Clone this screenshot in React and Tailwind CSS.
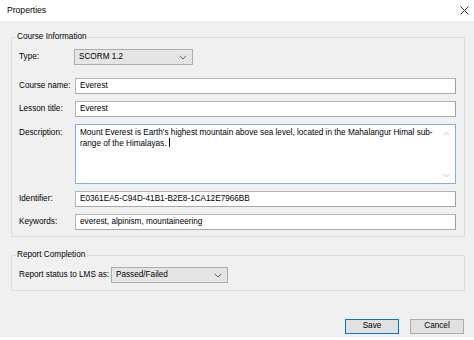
import React from "react";

const font = { fontFamily: '"Liberation Sans", Arial, sans-serif' };

function Chevron({ className = "" }) {
  return (
    <svg width="8" height="5" viewBox="0 0 8 5" className={className}>
      <path d="M0.8 0.8 L4 4 L7.2 0.8" fill="none" stroke="#606060" strokeWidth="1" />
    </svg>
  );
}

function Select({ value, className = "" }) {
  return (
    <div
      className={`h-[16px] flex items-center justify-between pl-[4px] pr-[5px] bg-[#e5e5e5] border border-[#adadad] text-[8.2px] text-black ${className}`}
    >
      <span>{value}</span>
      <Chevron />
    </div>
  );
}

function Input({ value }) {
  return (
    <div className="h-[16px] w-[381px] flex items-center pl-[4px] bg-white border border-[#b4b4b4] border-r-[#a0a0a0] border-b-[#a8a8a8] text-[8.2px] text-black whitespace-nowrap">
      {value}
    </div>
  );
}

function Row({ label, children, className = "" }) {
  return (
    <div className={`flex items-center ${className}`}>
      <div className="w-[56px] text-[8.2px] text-black whitespace-nowrap">{label}</div>
      {children}
    </div>
  );
}

export default function App() {
  return (
    <div className="w-[474px] h-[340px] bg-[#f0f0f0] flex flex-col overflow-hidden" style={font}>
      <div className="h-[21px] bg-white flex items-center justify-between pl-[7px] pr-[5px] shrink-0">
        <span className="text-[8.6px] text-black">Properties</span>
        <svg width="9" height="9" viewBox="0 0 9 9">
          <path d="M0.5 0.5 L8.5 8.5 M8.5 0.5 L0.5 8.5" stroke="#333" strokeWidth="1" />
        </svg>
      </div>

      <div className="flex-1 flex flex-col pl-[11px] pr-[9px]">
        <fieldset className="mt-[10px] border border-[#dcdcdc] pl-[7px] pr-[8px] pt-[6px] pb-[6px] flex flex-col">
          <legend className="ml-[-3px] px-px leading-[12px] text-[8.2px] text-black">Course Information</legend>
          <Row label="Type:">
            <Select value="SCORM 1.2" className="w-[119px] -ml-px" />
          </Row>
          <Row label="Course name:" className="mt-[13px]">
            <Input value="Everest" />
          </Row>
          <Row label="Lesson title:" className="mt-[7px]">
            <Input value="Everest" />
          </Row>
          <div className="flex items-start mt-[7px]">
            <div className="w-[56px] text-[8.2px] text-black pt-[3px]">Description:</div>
            <div className="relative h-[60px] w-[381px] bg-white border border-[#7fb2e3] pl-[4px] pt-[3px] text-[8.2px] leading-[9.5px] text-black whitespace-nowrap">
              Mount Everest is Earth’s highest mountain above sea level, located in the Mahalangur Himal sub-
              <br />
              range of the Himalayas. <span className="inline-block w-px h-[9px] bg-black align-[-1px]" />
              <div className="absolute right-[5px] top-[6px]">
                <svg width="7" height="5" viewBox="0 0 7 5">
                  <path d="M0.8 4 L3.5 1.2 L6.2 4" fill="none" stroke="#c2c2c2" strokeWidth="1" />
                </svg>
              </div>
              <div className="absolute right-[5px] bottom-[5px]">
                <svg width="7" height="5" viewBox="0 0 7 5">
                  <path d="M0.8 1 L3.5 3.8 L6.2 1" fill="none" stroke="#c2c2c2" strokeWidth="1" />
                </svg>
              </div>
            </div>
          </div>
          <Row label="Identifier:" className="mt-[7px]">
            <Input value="E0361EA5-C94D-41B1-B2E8-1CA12E7966BB" />
          </Row>
          <Row label="Keywords:" className="mt-[7px]">
            <Input value="everest, alpinism, mountaineering" />
          </Row>
        </fieldset>

        <fieldset className="mt-[12px] border border-[#dcdcdc] pl-[7px] pr-[8px] pt-[6px] pb-[7px] flex flex-col">
          <legend className="ml-[-3px] px-px leading-[12px] text-[8.2px] text-black">Report Completion</legend>
          <div className="flex items-center">
            <div className="w-[92px] text-[8.2px] text-black whitespace-nowrap">Report status to LMS as:</div>
            <Select value="Passed/Failed" className="w-[117px]" />
          </div>
        </fieldset>

        <div className="mt-[28px] flex justify-end gap-[11px] pr-px">
          <div className="w-[54px] h-[15px] flex items-center justify-center bg-[#e1e1e1] border border-[#0078d7] text-[8.2px] text-black">
            Save
          </div>
          <div className="w-[54px] h-[15px] flex items-center justify-center bg-[#e1e1e1] border border-[#adadad] text-[8.2px] text-black">
            Cancel
          </div>
        </div>
      </div>
      <div className="h-[3px] bg-white shrink-0" />
    </div>
  );
}
